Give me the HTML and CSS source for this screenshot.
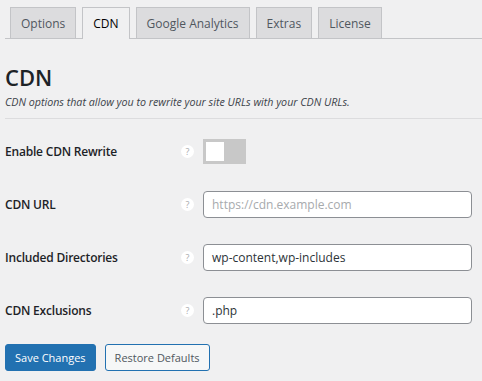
FILE: index.html
```html
<!DOCTYPE html>
<html>
<head>
<meta charset="utf-8">
<link rel="stylesheet" href="styles.css">
</head>
<body>
<div class="wrap">
  <nav class="tabs">
    <span class="tab">Options</span>
    <span class="tab active">CDN</span>
    <span class="tab">Google Analytics</span>
    <span class="tab">Extras</span>
    <span class="tab">License</span>
  </nav>
  <h2 class="title">CDN</h2>
  <p class="desc">CDN options that allow you to rewrite your site URLs with your CDN URLs.</p>
  <hr class="sep">
  <div class="form">
    <div class="row">
      <div class="label">Enable CDN Rewrite</div>
      <span class="help">?</span>
      <span class="toggle"><span class="knob"></span></span>
    </div>
    <div class="row">
      <div class="label">CDN URL</div>
      <span class="help">?</span>
      <div class="input placeholder">https://cdn.example.com</div>
    </div>
    <div class="row">
      <div class="label">Included Directories</div>
      <span class="help">?</span>
      <div class="input">wp-content,wp-includes</div>
    </div>
    <div class="row">
      <div class="label">CDN Exclusions</div>
      <span class="help">?</span>
      <div class="input">.php</div>
    </div>
  </div>
  <div class="actions">
    <span class="btn primary">Save Changes</span>
    <span class="btn secondary">Restore Defaults</span>
  </div>
</div>
</body>
</html>
```
FILE: styles.css
```css
html, body {
  margin: 0;
  padding: 0;
  background: #f0f0f1;
}
body {
  font-family: "Open Sans", "Noto Sans", sans-serif;
  color: #1d2327;
  font-size: 12px;
}
.wrap {
  padding: 7px 0 0 5px;
}
.tabs {
  display: flex;
  gap: 6px;
  padding-left: 5px;
  border-bottom: 1px solid #c3c4c7;
  height: 31px;
}
.tab {
  box-sizing: border-box;
  height: 31px;
  display: flex;
  align-items: center;
  padding: 0 10px;
  background: #dcdcde;
  border: 1px solid #c3c4c7;
  border-bottom: none;
  color: #50575e;
  font-size: 12px;
}
.tab.active {
  background: #f0f0f1;
  color: #000;
  height: 32px;
  margin-bottom: -1px;
}
.title {
  margin: 25px 0 0;
  font-size: 22px;
  font-weight: 600;
  line-height: 26px;
}
.desc {
  margin: 5px 0 0;
  font-size: 10.7px;
  font-style: italic;
  color: #3c434a;
}
.sep {
  margin: 9px 0 0;
  border: 0;
  border-top: 1px solid #dcdcde;
}
.form {
  display: flex;
  flex-direction: column;
  padding-top: 19px;
  gap: 27px;
}
.row {
  display: flex;
  align-items: center;
  height: 26px;
}
.label {
  width: 176px;
  font-weight: 600;
  font-size: 12px;
  letter-spacing: -0.2px;
}
.help {
  width: 13px;
  height: 13px;
  border-radius: 50%;
  background: #fff;
  color: #a7aaad;
  font-size: 9px;
  display: flex;
  align-items: center;
  justify-content: center;
  margin-right: 9px;
}
.toggle {
  width: 43px;
  height: 25px;
  background: #c8c8c8;
  display: flex;
  align-items: center;
  padding-left: 3px;
  box-sizing: border-box;
}
.knob {
  width: 18px;
  height: 19px;
  background: #fff;
}
.input {
  box-sizing: border-box;
  width: 269px;
  height: 27px;
  border: 1px solid #8c8f94;
  border-radius: 4px;
  background: #fff;
  display: flex;
  align-items: center;
  padding-left: 8px;
  font-size: 12px;
  color: #2c3338;
}
.input.placeholder {
  color: #a7aaad;
}
.actions {
  display: flex;
  gap: 9px;
  margin-top: 21px;
}
.btn {
  box-sizing: border-box;
  height: 27px;
  display: flex;
  align-items: center;
  padding: 0 9px;
  border-radius: 3px;
  font-size: 11px;
}
.primary {
  background: #2271b1;
  border: 1px solid #2271b1;
  color: #fff;
}
.secondary {
  background: #f6f7f7;
  border: 1px solid #2271b1;
  color: #50575e;
}
```
